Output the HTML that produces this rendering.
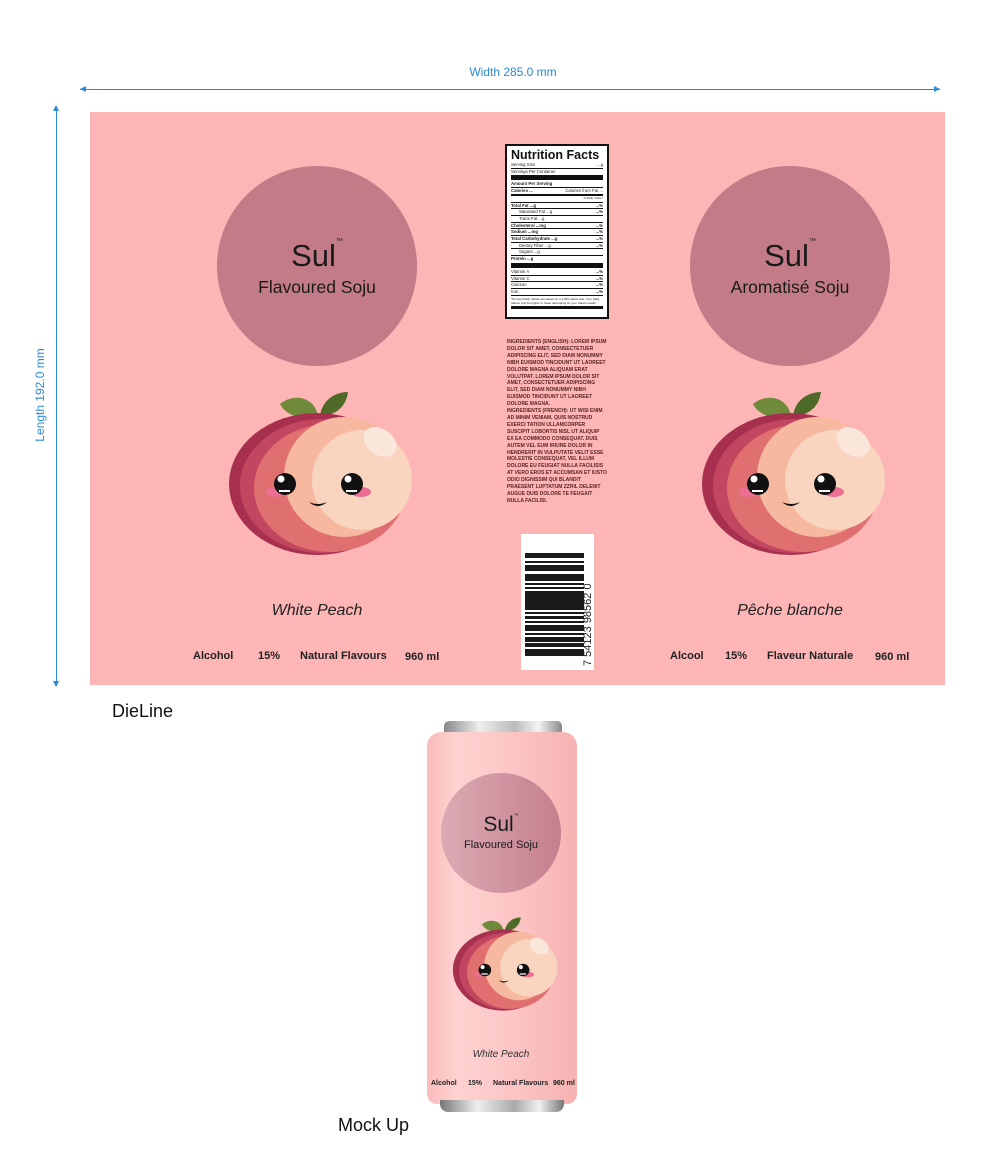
<!DOCTYPE html>
<html><head><meta charset="utf-8"><style>
*{margin:0;padding:0;box-sizing:border-box}
body{width:1003px;height:1157px;background:#fff;position:relative;font-family:"Liberation Sans",sans-serif;overflow:hidden}
.a{position:absolute}
.panel{left:90px;top:112px;width:855px;height:573px;background:#fdb5b5}
.circ{border-radius:50%;background:#c47b88;text-align:center;color:#1a1a1a}
.sul{font-size:31px;font-weight:500;line-height:1}
.sul sup{font-size:7px;vertical-align:top;position:relative;top:-2px}
.sub{font-size:17.5px}
.foot{font-size:11px;font-weight:bold;color:#222}
.nf{left:505px;top:144px;width:104px;height:175px;background:#fff;border:2px solid #111;padding:3px 4px;font-size:4.3px;color:#222;line-height:5.7px}
.nf .r{border-bottom:0.7px solid #111;display:flex;justify-content:space-between}
.nf .t{border-bottom:1px solid #111}
.thick{height:5px;background:#111;margin:1px 0}
.ing{left:507px;top:339px;width:100px;font-size:5px;line-height:6.9px;font-weight:bold;color:#5a2424}
</style></head><body>
<svg width="0" height="0" style="position:absolute">
<defs>
<symbol id="peach" viewBox="0 0 210 180">
<path d="M70 24 C85 12 105 18 108 36 C92 40 76 36 70 24Z" fill="#6e8a3a"/>
<path d="M110 36 C112 20 125 12 138 12 C136 28 124 36 110 36Z" fill="#4f6a28"/>
<ellipse cx="107" cy="104" rx="88" ry="71" fill="#a8304f"/>
<ellipse cx="112" cy="106" rx="82" ry="67" fill="#c2465f"/>
<ellipse cx="120" cy="108" rx="76" ry="64" fill="#e07070"/>
<circle cx="134" cy="97" r="60" fill="#f6b9a0"/>
<circle cx="152" cy="100" r="50" fill="#f9d5c0"/>
<ellipse cx="170" cy="62" rx="18" ry="13" fill="#fbe6dc" transform="rotate(35 170 62)"/>
<ellipse cx="66" cy="112" rx="10" ry="5" fill="#ec6f92"/>
<ellipse cx="151" cy="112" rx="10" ry="5" fill="#ec6f92"/>
<circle cx="75" cy="104" r="11" fill="#111"/>
<circle cx="142" cy="104" r="11" fill="#111"/>
<circle cx="71" cy="99" r="3.5" fill="#fff"/>
<circle cx="138" cy="99" r="3.5" fill="#fff"/>
<path d="M69 110 h11 v2 h-11z" fill="#fff"/>
<path d="M136 110 h11 v2 h-11z" fill="#fff"/>
<path d="M99 122 Q108 130 117 122 Q108 126 99 122Z" fill="#111"/>
</symbol>
</defs></svg>

<div class="a" style="left:80px;top:89px;width:860px;height:1px;background:#2a8ad6"></div>
<div class="a" style="left:80px;top:86px;width:0;height:0;border:3.5px solid transparent;border-right:6px solid #2a8ad6;border-left:0"></div>
<div class="a" style="left:934px;top:86px;width:0;height:0;border:3.5px solid transparent;border-left:6px solid #2a8ad6;border-right:0"></div>
<div class="a" style="left:440px;top:65px;width:146px;text-align:center;font-size:12px;color:#2a8ad6">Width 285.0 mm</div>
<div class="a" style="left:56px;top:107px;width:1px;height:579px;background:#2a8ad6"></div>
<div class="a" style="left:53px;top:105px;border:3.5px solid transparent;border-bottom:6px solid #2a8ad6;border-top:0"></div>
<div class="a" style="left:53px;top:681px;border:3.5px solid transparent;border-top:6px solid #2a8ad6;border-bottom:0"></div>
<div class="a" style="left:-20px;top:388px;width:120px;text-align:center;font-size:12px;color:#2a8ad6;transform:rotate(-90deg)">Length 192.0 mm</div>

<div class="a panel"></div>

<div class="a circ" style="left:217px;top:166px;width:200px;height:200px"><div style="padding-top:74px" class="sul">Sul<sup>™</sup></div><div class="sub" style="margin-top:6px">Flavoured Soju</div></div>
<svg class="a" style="left:210px;top:380px" width="210" height="180"><use href="#peach"/></svg>
<div class="a" style="left:217px;top:602px;width:200px;text-align:center;font-size:16px;font-style:italic;color:#222">White Peach</div>
<div class="a foot" style="left:193px;top:650px">Alcohol</div>
<div class="a foot" style="left:258px;top:650px">15%</div>
<div class="a foot" style="left:300px;top:650px">Natural Flavours</div>
<div class="a foot" style="left:405px;top:651px">960 ml</div>

<div class="a circ" style="left:690px;top:166px;width:200px;height:200px"><div style="padding-top:74px" class="sul">Sul<sup>™</sup></div><div class="sub" style="margin-top:6px">Aromatisé Soju</div></div>
<svg class="a" style="left:683px;top:380px" width="210" height="180"><use href="#peach"/></svg>
<div class="a" style="left:690px;top:602px;width:200px;text-align:center;font-size:16px;font-style:italic;color:#222">Pêche blanche</div>
<div class="a foot" style="left:670px;top:650px">Alcool</div>
<div class="a foot" style="left:725px;top:650px">15%</div>
<div class="a foot" style="left:767px;top:650px">Flaveur Naturale</div>
<div class="a foot" style="left:875px;top:651px">960 ml</div>

<div class="a nf">
<div style="font-size:12.5px;font-weight:bold;line-height:13px;color:#111">Nutrition Facts</div>
<div class="r"><span>Serving Size</span><span>...g</span></div>
<div>Servings Per Container</div>
<div class="thick"></div>
<div class="t" style="font-weight:bold">Amount Per Serving</div>
<div class="r" style="border-bottom:2px solid #111"><b>Calories ...</b><span>Calories from Fat ...</span></div>
<div style="text-align:right;font-size:3px" class="t">% Daily Value*</div>
<div class="r"><b>Total Fat ...g</b><b>...%</b></div>
<div class="r" style="padding-left:8px"><span>Saturated Fat ...g</span><b>...%</b></div>
<div class="r" style="padding-left:8px"><span>Trans Fat ...g</span></div>
<div class="r"><b>Cholesterol ...mg</b><b>...%</b></div>
<div class="r"><b>Sodium ...mg</b><b>...%</b></div>
<div class="r"><b>Total Carbohydrate ...g</b><b>...%</b></div>
<div class="r" style="padding-left:8px"><span>Dietary Fiber ...g</span><b>...%</b></div>
<div class="r" style="padding-left:8px"><span>Sugars ...g</span></div>
<div><b>Protein ...g</b></div>
<div class="thick"></div>
<div class="r"><span>Vitamin A</span><b>...%</b></div>
<div class="r"><span>Vitamin C</span><b>...%</b></div>
<div class="r"><span>Calcium</span><b>...%</b></div>
<div class="r"><span>Iron</span><b>...%</b></div>
<div style="font-size:3px;line-height:4px;margin-top:1px">*Percent Daily Values are based on a 2,000 calorie diet. Your Daily Values may be higher or lower depending on your calorie needs.</div>
<div class="thick" style="height:3px"></div>
</div>

<div class="a ing">INGREDIENTS (ENGLISH): LOREM IPSUM DOLOR SIT AMET, CONSECTETUER ADIPISCING ELIT, SED DIAM NONUMMY NIBH EUISMOD TINCIDUNT UT LAOREET DOLORE MAGNA ALIQUAM ERAT VOLUTPAT. LOREM IPSUM DOLOR SIT AMET, CONSECTETUER ADIPISCING ELIT, SED DIAM NONUMMY NIBH EUISMOD TINCIDUNT UT LAOREET DOLORE MAGNA.<br>INGREDIENTS (FRENCH): UT WISI ENIM AD MINIM VENIAM, QUIS NOSTRUD EXERCI TATION ULLAMCORPER SUSCIPIT LOBORTIS NISL UT ALIQUIP EX EA COMMODO CONSEQUAT. DUIS AUTEM VEL EUM IRIURE DOLOR IN HENDRERIT IN VULPUTATE VELIT ESSE MOLESTIE CONSEQUAT, VEL ILLUM DOLORE EU FEUGIAT NULLA FACILISIS AT VERO EROS ET ACCUMSAN ET IUSTO ODIO DIGNISSIM QUI BLANDIT PRAESENT LUPTATUM ZZRIL DELENIT AUGUE DUIS DOLORE TE FEUGAIT NULLA FACILISI.</div>

<div class="a" style="left:521px;top:534px;width:73px;height:136px;background:#fff"></div>
<svg class="a" style="left:521px;top:534px" width="73" height="136">
<g fill="#1a1a1a">
<rect x="4" y="19" width="59" height="5"/><rect x="4" y="27" width="59" height="2"/><rect x="4" y="31" width="59" height="6"/>
<rect x="4" y="40" width="59" height="7"/><rect x="4" y="49" width="59" height="2"/><rect x="4" y="53" width="59" height="2"/>
<rect x="4" y="57" width="59" height="9"/><rect x="4" y="66" width="59" height="10"/><rect x="4" y="78" width="59" height="2"/>
<rect x="4" y="82" width="59" height="3"/><rect x="4" y="87" width="59" height="2"/><rect x="4" y="91" width="59" height="6"/>
<rect x="4" y="99" width="59" height="2"/><rect x="4" y="103" width="59" height="5"/><rect x="4" y="109" width="59" height="4"/>
<rect x="4" y="115" width="59" height="7"/>
</g>
<text transform="translate(70,132) rotate(-90)" font-family="Liberation Sans" font-size="11" fill="#222">7 54123 98562 0</text>
</svg>

<div class="a" style="left:112px;top:701px;font-size:18px;color:#111">DieLine</div>

<div class="a" style="left:444px;top:721px;width:118px;height:14px;border-radius:5px 5px 2px 2px;background:linear-gradient(90deg,#888,#eee 30%,#bbb 60%,#f4f4f4 80%,#888)"></div>
<div class="a" style="left:427px;top:732px;width:150px;height:372px;border-radius:14px 14px 10px 10px;background:linear-gradient(90deg,#fbbcbc,#fdd2d0 20%,#fcc4c4 60%,#f6b2b2)"></div>
<div class="a" style="left:440px;top:1100px;width:124px;height:12px;border-radius:0 0 8px 8px;background:linear-gradient(90deg,#777,#eee 30%,#aaa 60%,#f0f0f0 80%,#777)"></div>
<div class="a circ" style="left:441px;top:773px;width:120px;height:120px;background:linear-gradient(90deg,#dcaab4,#c47f8c)"><div style="padding-top:41px;font-size:21px;font-weight:500;line-height:1">Sul<sup style="font-size:5px;vertical-align:top">™</sup></div><div style="font-size:11px;margin-top:4px">Flavoured Soju</div></div>
<svg class="a" style="left:442px;top:910px" width="120" height="104" viewBox="0 0 210 180"><use href="#peach"/></svg>
<div class="a" style="left:441px;top:1049px;width:120px;text-align:center;font-size:10px;font-style:italic;color:#333">White Peach</div>
<div class="a" style="left:431px;top:1080px;font-size:7px;font-weight:bold;color:#222">Alcohol</div>
<div class="a" style="left:468px;top:1080px;font-size:7px;font-weight:bold;color:#222">15%</div>
<div class="a" style="left:493px;top:1080px;font-size:7px;font-weight:bold;color:#222">Natural Flavours</div>
<div class="a" style="left:553px;top:1080px;font-size:7px;font-weight:bold;color:#222">960 ml</div>

<div class="a" style="left:338px;top:1115px;font-size:18px;color:#111">Mock Up</div>
</body></html>
